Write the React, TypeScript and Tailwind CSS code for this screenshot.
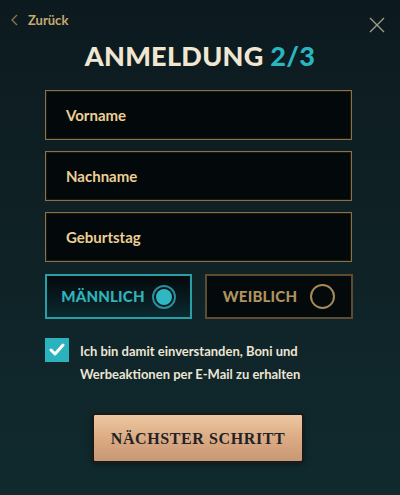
import React, { useState } from 'react';

// Registration step 2 of 3
const fields = ['Vorname', 'Nachname', 'Geburtstag'];

const App: React.FC = () => {
  const [gender, setGender] = useState<'m' | 'w'>('m');
  const [agree, setAgree] = useState(true);

  return (
    <div
      className="w-[400px] h-[495px] overflow-hidden bg-gradient-to-b from-[#0c1a1f] via-[#0f2226] to-[#102a2e] pt-[11px]"
      style={{ fontFamily: 'Lato, "Open Sans", sans-serif' }}
    >
      <div className="flex items-start justify-between pl-[11px] pr-[15px] h-[20px]">
        <button className="flex items-center gap-[10px] text-[#c8aa6e] font-bold text-[13px] leading-[18px]">
          <svg width="7" height="12" viewBox="0 0 7 12" fill="none">
            <path d="M6 1L1 6l5 5" stroke="#8a7650" strokeWidth="1.3" />
          </svg>
          Zurück
        </button>
        <button className="mt-[6px]">
          <svg width="16" height="16" viewBox="0 0 16 16" fill="none">
            <path d="M1 1l14 14M15 1L1 15" stroke="#a09b8c" strokeWidth="1.4" />
          </svg>
        </button>
      </div>

      <h1 className="text-center text-[27px] font-black leading-[32px] mt-[9px] tracking-[0.3px] text-[#f0e6d2]">
        ANMELDUNG <span className="text-[#2bb5c0]">2/3</span>
      </h1>

      <div className="flex flex-col gap-[11px] ml-[45px] w-[307px] mt-[18px]">
        {fields.map((f) => (
          <div
            key={f}
            className="h-[50px] border border-[#8a7248] bg-[#03080b] flex items-center px-[20px] shadow-[inset_0_0_0_1px_#1a1a14]"
          >
            <span className="text-[#eccf94] font-bold text-[15px]">{f}</span>
          </div>
        ))}
      </div>

      <div className="flex gap-[13px] ml-[45px] mt-[12px]">
        <button
          onClick={() => setGender('m')}
          className={`w-[147px] h-[45px] flex items-center justify-center gap-[7px] border-2 ${
            gender === 'm'
              ? 'border-[#2a9ea6] bg-gradient-to-b from-[#04090c] to-[#0b2a30] text-[#2fb3bc]'
              : 'border-[#6e5a38] bg-[#04090c] text-[#b0925e]'
          }`}
        >
          <span className="font-black text-[15px] tracking-[0.2px]">MÄNNLICH</span>
          <span
            className={`w-[24px] h-[24px] rounded-full flex items-center justify-center border-2 ${
              gender === 'm' ? 'border-[#2a8e98]' : 'border-[#a88a58]'
            }`}
          >
            {gender === 'm' && <span className="w-[16px] h-[16px] rounded-full bg-[#2fb8c2]" />}
          </span>
        </button>
        <button
          onClick={() => setGender('w')}
          className={`w-[148px] h-[45px] flex items-center justify-center gap-[13px] border-2 ${
            gender === 'w'
              ? 'border-[#2a9ea6] bg-gradient-to-b from-[#04090c] to-[#0b2a30] text-[#2fb3bc]'
              : 'border-[#5e4c30] bg-[#04090c] text-[#b0925e]'
          }`}
        >
          <span className="font-black text-[15px] tracking-[0.2px]">WEIBLICH</span>
          <span
            className={`w-[25px] h-[25px] rounded-full flex items-center justify-center border-2 ${
              gender === 'w' ? 'border-[#2a8e98]' : 'border-[#a88a58]'
            }`}
          >
            {gender === 'w' && <span className="w-[16px] h-[16px] rounded-full bg-[#2fb8c2]" />}
          </span>
        </button>
      </div>

      <div className="flex items-start gap-[11px] ml-[45px] mt-[19px]">
        <button
          onClick={() => setAgree(!agree)}
          className={`w-[24px] h-[24px] shrink-0 flex items-center justify-center ${
            agree ? 'bg-[#2ab3bd]' : 'border border-[#2ab3bd]'
          }`}
        >
          {agree && (
            <svg width="16" height="14" viewBox="0 0 16 14" fill="none">
              <path d="M2 7l4 4 8-9" stroke="#ffffff" strokeWidth="3" strokeLinecap="round" strokeLinejoin="round" />
            </svg>
          )}
        </button>
        <p className="text-[13px] leading-[23px] text-[#ece4d4] font-bold mt-[2px]">
          Ich bin damit einverstanden, Boni und
          <br />
          Werbeaktionen per E-Mail zu erhalten
        </p>
      </div>

      <div className="flex justify-center mt-[28px] pr-[4px]">
        <button className="w-[210px] h-[48px] border border-[#14181a] rounded-[2px] bg-gradient-to-b from-[#ecc8a2] via-[#dcab84] to-[#c89874] shadow-[0_0_0_1px_#1c1c1a,0_2px_6px_rgba(0,0,0,0.5)]">
          <span
            className="text-[#1e2328] font-bold text-[16px] tracking-[0.6px]"
            style={{ fontFamily: '"Liberation Serif", "DejaVu Serif", serif' }}
          >
            NÄCHSTER SCHRITT
          </span>
        </button>
      </div>
    </div>
  );
};

export default App;
